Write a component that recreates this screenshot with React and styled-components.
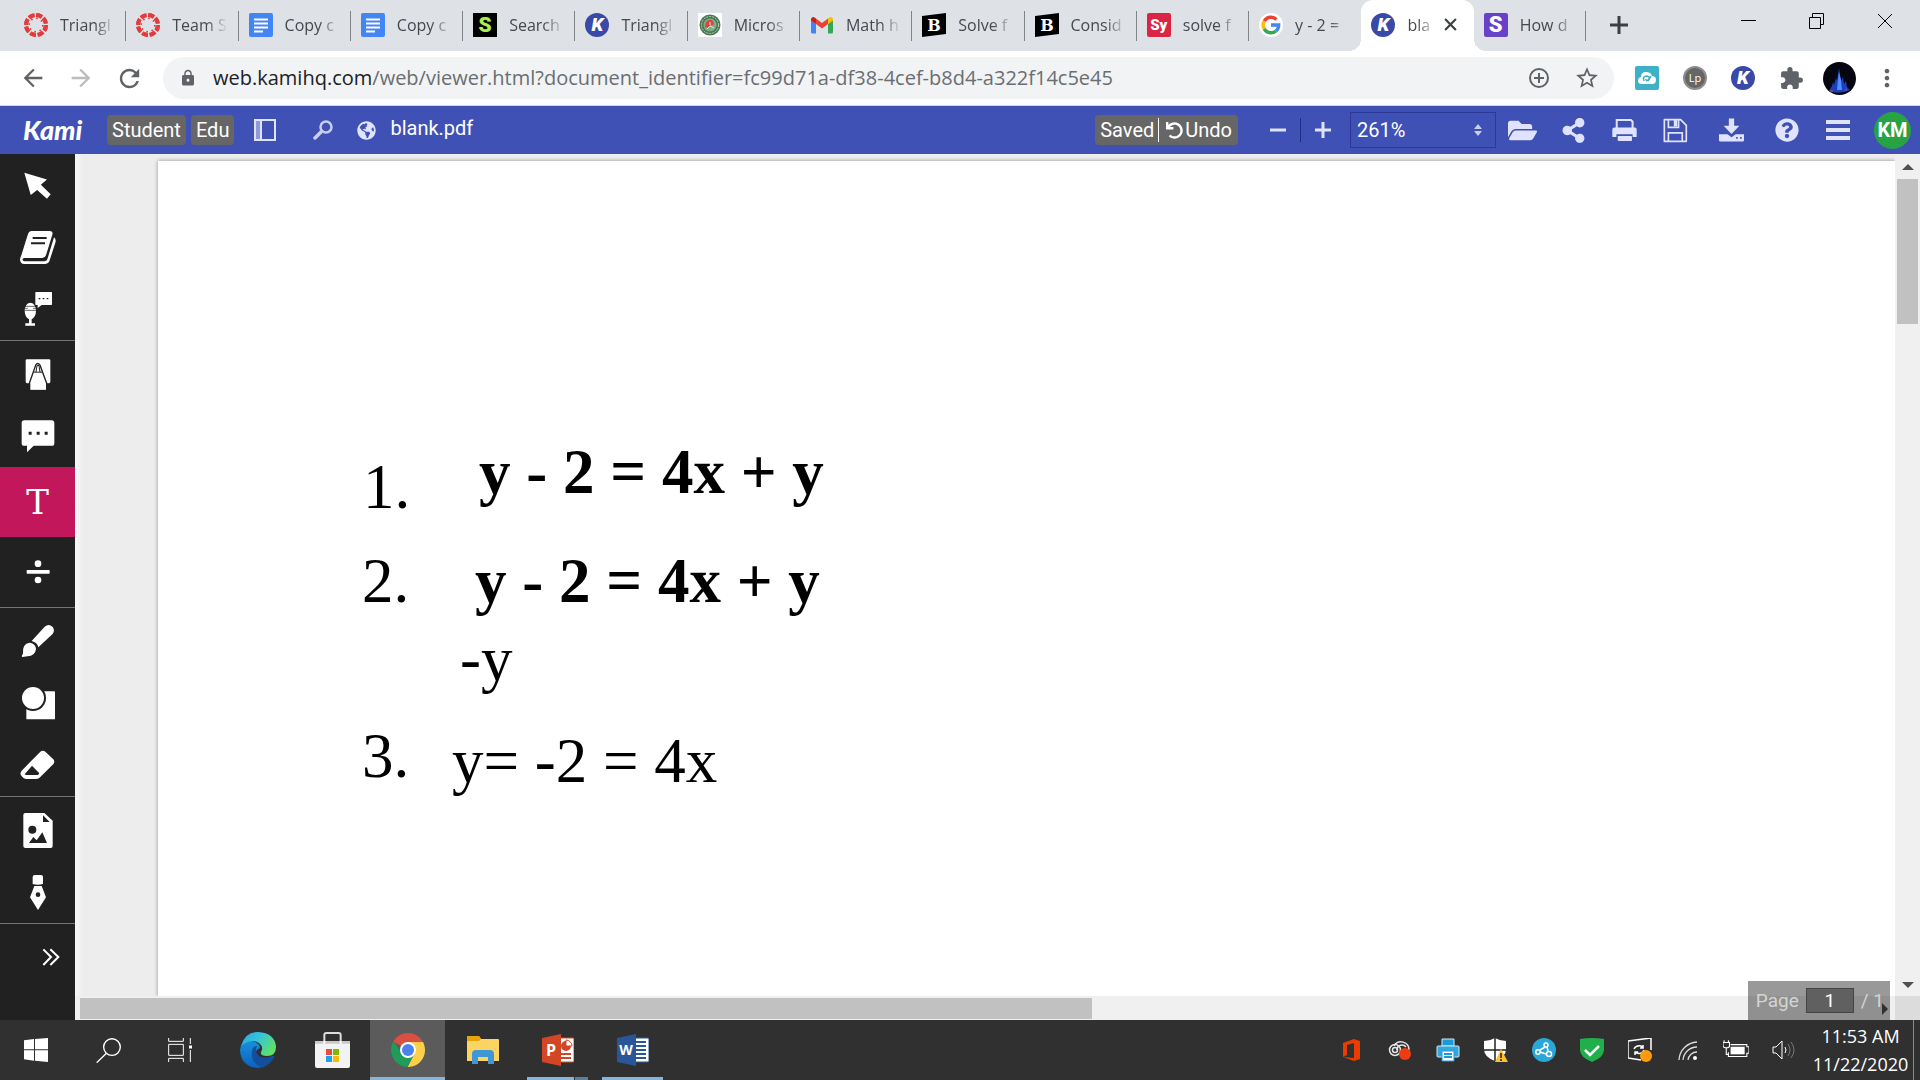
import React from 'react';
import styled, { createGlobalStyle, css } from 'styled-components';
import {
  FaFolderOpen,
  FaGlobeAmericas,
  FaQuestionCircle,
  FaShareAlt,
  FaUndo,
} from 'react-icons/fa';
import {
  MdArrowBack,
  MdArrowForward,
  MdExtension,
  MdLock,
  MdMoreVert,
  MdRefresh,
  MdStarBorder,
} from 'react-icons/md';

const GlobalStyle = createGlobalStyle`
  * {
    box-sizing: border-box;
  }
  body {
    margin: 0;
    font-family: 'Open Sans', 'Noto Sans', sans-serif;
    overflow: hidden;
  }
  button {
    border: 0;
    padding: 0;
    background: none;
    font: inherit;
    color: inherit;
    cursor: pointer;
  }
`;

const Svg = styled.svg`
  display: block;
  flex: none;
  width: ${(p) => p.$w}px;
  height: ${(p) => p.$h}px;
  fill: ${(p) => p.$fill || '#fff'};
`;

const Screen = styled.div`
  display: flex;
  flex-direction: column;
  height: 100vh;
`;

/* browser tabs */
const TabStrip = styled.header`
  display: flex;
  height: 51px;
  flex: none;
  background: #dee1e6;
`;
const TabList = styled.nav`
  display: flex;
  flex: 1;
  min-width: 0;
  padding-left: 14px;
`;
const Tab = styled.div`
  position: relative;
  display: flex;
  flex: 1 1 0;
  align-items: center;
  min-width: 0;
  padding: 0 8px 2px 10px;
  gap: 12px;
  ${(p) =>
    p.$active
      ? css`
          background: #fff;
          border-radius: 12px 12px 0 0;
          &::before,
          &::after {
            content: '';
            position: absolute;
            bottom: 0;
            width: 12px;
            height: 12px;
          }
          &::before {
            right: 100%;
            background: radial-gradient(circle at 0 0, transparent 12px, #fff 12px);
          }
          &::after {
            left: 100%;
            background: radial-gradient(circle at 100% 0, transparent 12px, #fff 12px);
          }
        `
      : !p.$noLine &&
        css`
          &::after {
            content: '';
            position: absolute;
            right: 0;
            top: 11px;
            width: 1px;
            height: 30px;
            background: #808387;
          }
        `}
`;
const TabTitle = styled.span`
  flex: 1;
  min-width: 0;
  white-space: nowrap;
  font-size: 16px;
  line-height: 24px;
  color: #45494d;
  mask-image: linear-gradient(to right, #000 ${(p) => (p.$active ? '10px, transparent 30px' : '34px, transparent 56px')});
`;
const CloseTab = styled.button`
  display: flex;
  margin-right: 9px;
`;
const WindowArea = styled.div`
  display: flex;
  flex: none;
  width: 334px;
  align-items: flex-start;
  padding-right: 1px;
`;
const NewTab = styled.button`
  display: grid;
  place-items: center;
  width: 66px;
  height: 50px;
`;
const WindowButtons = styled.div`
  display: flex;
  margin-left: auto;
`;
const WindowButton = styled.button`
  display: grid;
  place-items: center;
  width: 68px;
  height: 42px;
`;
const SquareMark = styled.span`
  display: grid;
  place-items: center;
  flex: none;
  width: 24px;
  height: 24px;
  border-radius: ${(p) => p.$radius || '0'};
  background: ${(p) => p.$bg};
  color: ${(p) => p.$color || '#fff'};
  font: 900 ${(p) => p.$size}/24px Roboto, sans-serif;
`;
const RoundMark = styled.span`
  display: grid;
  place-items: center;
  flex: none;
  width: 24px;
  height: 24px;
  border-radius: 50%;
  background: #3a49a8;
  color: #fff;
  font: italic 900 19px/24px Roboto, sans-serif;
`;
const LpMark = styled(RoundMark)`
  background: #666;
  border: 2px solid #8d8d8d;
  font: 400 11px/20px 'Open Sans', sans-serif;
`;

/* address bar */
const Address = styled.div`
  display: flex;
  align-items: center;
  flex: none;
  height: 55px;
  padding: 0 9px;
  background: #fff;
  border-bottom: 1px solid #d5d8dc;
`;
const NavButton = styled.button`
  display: grid;
  place-items: center;
  flex: none;
  width: 48px;
  height: 42px;
  color: ${(p) => (p.$muted ? '#babcbe' : '#5f6368')};
`;
const Omnibox = styled.div`
  display: flex;
  flex: 1;
  min-width: 0;
  align-items: center;
  height: 42px;
  margin-left: 10px;
  padding: 0 3px 0 16px;
  border-radius: 21px;
  background: #f1f3f4;
  color: #5f6368;
`;
const Url = styled.a`
  flex: 1;
  min-width: 0;
  overflow: hidden;
  margin-left: 16px;
  white-space: nowrap;
  font-size: 20px;
  line-height: 28px;
  color: #6a6e73;
  text-decoration: none;
  b {
    font-weight: 400;
    color: #202124;
  }
`;
const Extensions = styled.div`
  display: flex;
  flex: none;
  margin-left: 9px;
`;

/* app header */
const Header = styled.header`
  display: flex;
  align-items: center;
  flex: none;
  height: 48px;
  padding: 0 9px 0 23px;
  background: #3f51b5;
  color: #dfe3ff;
  font: 20px/30px Roboto, sans-serif;
`;
const Logo = styled.span`
  width: 84px;
  color: #fff;
  font: italic 900 27px/30px Lato, sans-serif;
`;
const Chip = styled.span`
  margin-right: 5px;
  padding: 0 5px;
  border-radius: 4px;
  background: #666;
  color: #fff;
`;
const HeaderTools = styled.div`
  display: flex;
  gap: 7px;
  width: 118px;
`;
const FileName = styled.span`
  flex: 1;
  margin-left: 14px;
  padding-bottom: 4px;
  color: #fff;
`;
const SaveState = styled.div`
  display: flex;
  margin-right: 21px;
  padding: 0 6px 0 5px;
  border-radius: 4px;
  background: #666;
  color: #fff;
`;
const UndoButton = styled.button`
  display: flex;
  align-items: center;
  gap: 2px;
  height: 24px;
  margin: 3px 0 3px 4px;
  padding-left: 7px;
  border-left: 1px solid #fff;
`;
const ZoomButton = styled.button`
  display: grid;
  place-items: center;
  width: 38px;
  height: 36px;
`;
const Divider = styled.span`
  width: 1px;
  height: 24px;
  margin: 0 3px;
  background: #1f2f86;
`;
const ZoomBox = styled.div`
  display: flex;
  align-items: center;
  width: 146px;
  height: 36px;
  margin: 0 1px 0 8px;
  padding-right: 13px;
  border: 1px solid #2a3a96;
`;
const ZoomSelect = styled.select`
  flex: 1;
  height: 34px;
  padding: 0 6px;
  border: 0;
  appearance: none;
  background: transparent;
  color: #fff;
  font: 20px/30px Roboto, sans-serif;
`;
const IconButton = styled.button`
  display: grid;
  place-items: center;
  flex: none;
  width: ${(p) => (p.$wide ? '60px' : '51px')};
  height: 40px;
`;
const Avatar = styled.button`
  width: 37px;
  height: 37px;
  margin-left: 11px;
  border-radius: 50%;
  background: #27a343;
  color: #fff;
  font: 700 20px/37px Roboto, sans-serif;
`;

/* workspace */
const Workspace = styled.div`
  display: flex;
  flex: 1;
  min-height: 0;
`;
const Sidebar = styled.aside`
  flex: none;
  width: 75px;
  background: #212121;
`;
const ToolGroup = styled.div`
  & + & {
    padding-top: 2px;
    border-top: 1px solid #757575;
  }
`;
const Tool = styled.button`
  display: flex;
  align-items: center;
  justify-content: ${(p) => (p.$end ? 'flex-end' : 'center')};
  width: 100%;
  height: ${(p) => (p.$tall ? '70px' : '62px')};
  padding-right: ${(p) => (p.$end ? '15px' : '0')};
  background: ${(p) => (p.$active ? '#c2185b' : 'none')};
  color: #fff;
  font: 34px/40px 'DejaVu Serif', serif;
`;
const ViewerArea = styled.main`
  position: relative;
  display: grid;
  flex: 1;
  min-width: 0;
  grid-template: minmax(0, 1fr) 24px / minmax(0, 1fr) 25px;
`;
const Canvas = styled.div`
  padding: 7px 0 0 83px;
  background: linear-gradient(to right, #f8f8f8, #ededed 8px);
`;
const Page = styled.article`
  position: relative;
  height: 100%;
  background: #fff;
  box-shadow: 0 0 4px rgba(0, 0, 0, 0.4);
  clip-path: inset(-6px 0 0 -6px);
`;
const Note = styled.div`
  position: absolute;
  left: ${(p) => p.$left}px;
  top: ${(p) => p.$top}px;
  white-space: nowrap;
  color: #000;
  font: ${(p) => (p.$bold ? 700 : 400)} 63px/70px 'Liberation Serif', serif;
`;
const VerticalBar = styled.div`
  display: flex;
  flex-direction: column;
  align-items: center;
  padding: 10px 0 8px;
  background: #f0f0f0;
`;
const VerticalTrack = styled.div`
  flex: 1;
  align-self: stretch;
  padding: 9px 2px 0;
`;
const VerticalThumb = styled.div`
  height: 18%;
  background: #c1c1c1;
`;
const HorizontalBar = styled.div`
  display: flex;
  align-items: center;
  justify-content: space-between;
  padding: 2px 7px 1px 5px;
  background: #f0f0f0;
`;
const HorizontalThumb = styled.div`
  width: 56%;
  height: 21px;
  background: #c1c1c1;
`;
const Corner = styled.div`
  background: #dcdcdc;
`;
const PageBox = styled.div`
  position: absolute;
  right: 30px;
  bottom: 0;
  display: flex;
  align-items: center;
  height: 39px;
  padding: 0 6px 0 8px;
  background: rgba(0, 0, 0, 0.4);
  color: #d4d4d4;
  font: 19px/24px Roboto, sans-serif;
`;
const PageInput = styled.input`
  width: 48px;
  height: 25px;
  margin: 0 7px;
  border: 1px solid #444;
  background: #606060;
  color: #fff;
  text-align: center;
  font: 19px/24px Roboto, sans-serif;
`;

/* taskbar */
const Tasks = styled.footer`
  display: flex;
  flex: none;
  height: 60px;
  background: #303030;
  color: #fff;
`;
const taskLines = {
  active: css`
    left: 0;
    right: 0;
    background: #82b6de;
  `,
  open: css`
    left: 7px;
    right: 7px;
    background: #82b6de;
  `,
  stacked: css`
    left: 7px;
    right: 7px;
    background: linear-gradient(to right, #82b6de 47px, #303030 47px, #303030 48px, #5d7f99 48px);
  `,
};
const TaskButton = styled.button`
  position: relative;
  display: grid;
  place-items: center;
  width: ${(p) => (p.$wide ? '75px' : '72px')};
  height: 60px;
  background: ${(p) => (p.$state === 'active' ? '#5b5b5b' : 'none')};
  ${(p) =>
    p.$state &&
    css`
      &::after {
        content: '';
        position: absolute;
        bottom: 0;
        height: 3px;
        ${taskLines[p.$state]}
      }
    `}
`;
const TaskGroup = styled.div`
  display: flex;
  margin-right: 4px;
`;
const Tray = styled.div`
  display: flex;
  align-items: center;
  margin-left: auto;
  padding-right: 6px;
`;
const TrayButton = styled.button`
  display: grid;
  place-items: center;
  width: 48px;
  height: 60px;
`;
const Clock = styled.div`
  display: flex;
  flex-direction: column;
  justify-content: center;
  align-items: center;
  width: 106px;
  height: 60px;
  border-right: 1px solid #8a8a8a;
  font-size: 18px;
  line-height: 28px;
`;

const CanvasIcon = () => (
  <Svg viewBox="0 0 24 24" $w={24} $h={24}>
    <circle cx="12" cy="12" r="9" fill="none" stroke="#e23c3c" strokeWidth="6" strokeDasharray="5.4 1.67" />
    <circle cx="12" cy="12" r="8" fill="#dee1e6" />
    <circle cx="12" cy="12" r="10" fill="none" stroke="#e23c3c" strokeWidth="4" strokeDasharray="6 1.85" />
    <circle cx="12" cy="12" r="6.800" fill="none" stroke="#e23c3c" strokeWidth="1.600" strokeDasharray="1.6 3.74" />
  </Svg>
);

const DocsIcon = () => (
  <Svg viewBox="0 0 24 24" $w={24} $h={24}>
    <rect width="24" height="24" rx="2" fill="#4285f4" />
    <path d="M5 6.5h14M5 10.5h14M5 14.5h14M5 18.5h9" stroke="#fff" strokeWidth="2" />
  </Svg>
);

const SealIcon = () => (
  <Svg viewBox="0 0 24 24" $w={24} $h={24}>
    <rect width="24" height="24" fill="#fff" />
    <circle cx="12" cy="12" r="10.5" fill="#4b7a55" />
    <circle cx="12" cy="12" r="8.5" fill="none" stroke="#b9cdb4" strokeDasharray="2 1" />
    <circle cx="12" cy="12" r="6.5" fill="#7fae8b" />
    <path d="M7 14q0-6 4-7t5 4q-1 2-4 1-1 4-5 2z" fill="#d8473f" />
    <path d="M9 16l3-3 4 2M12 9v3" stroke="#dfe9dd" fill="none" />
  </Svg>
);

const GmailIcon = () => (
  <Svg viewBox="0 0 24 24" $w={24} $h={24}>
    <path d="M1 6v13q0 1.500 1.500 1.500H6V11z" fill="#4285f4" />
    <path d="M23 6v13q0 1.500-1.500 1.500H18V11z" fill="#34a853" />
    <path d="M18 5.500V11l5-3.500V6q-1-3-4-1.300z" fill="#fbbc04" />
    <path d="M6 5.500V11L1 7.500V6q1-3 4-1.300z" fill="#c5221f" />
    <path d="M6 5.500l6 4.500 6-4.500V11l-6 4.500L6 11z" fill="#ea4335" />
  </Svg>
);

const BarkIcon = () => (
  <Svg viewBox="0 0 24 24" $w={24} $h={24}>
    <path d="M0 3L24 0v21L0 24z" fill="#000" />
    <text x="12" y="18" textAnchor="middle" fill="#fff" fontFamily="DejaVu Serif" fontWeight="700" fontSize="16">B</text>
  </Svg>
);

const GoogleIcon = () => (
  <Svg viewBox="0 0 24 24" $w={24} $h={24}>
    <circle cx="12" cy="12" r="12" fill="#fff" />
    <g fill="none" strokeWidth="3.400">
      <path d="M17.500 6.500A7.800 7.800 0 0 0 5.200 8.200" stroke="#ea4335" />
      <path d="M5.200 8.200a7.800 7.800 0 0 0 0 7.600" stroke="#fbbc05" />
      <path d="M5.200 15.800a7.800 7.800 0 0 0 11.800 2.200" stroke="#34a853" />
      <path d="M17 18a7.800 7.800 0 0 0 2.700-6H12" stroke="#4285f4" />
    </g>
  </Svg>
);

const KamiMark = () => <RoundMark>K</RoundMark>;

const TABS = [
  { title: 'Triangl', icon: <CanvasIcon /> },
  { title: 'Team S', icon: <CanvasIcon /> },
  { title: 'Copy c', icon: <DocsIcon /> },
  { title: 'Copy c', icon: <DocsIcon /> },
  { title: 'Search', icon: <SquareMark $bg="#000" $color="#a9f04d" $size="21px">S</SquareMark> },
  { title: 'Triangl', icon: <KamiMark /> },
  { title: 'Micros', icon: <SealIcon /> },
  { title: 'Math h', icon: <GmailIcon /> },
  { title: 'Solve f', icon: <BarkIcon /> },
  { title: 'Consid', icon: <BarkIcon /> },
  { title: 'solve f', icon: <SquareMark $bg="#db2544" $size="15px" $radius="2px">Sy</SquareMark> },
  { title: 'y - 2 =', icon: <GoogleIcon />, noLine: true },
  { title: 'bla', icon: <KamiMark />, active: true },
  { title: 'How d', icon: <SquareMark $bg="#6941c8" $size="22px" $radius="2px">S</SquareMark> },
];

const NOTES = [
  { text: '1.', left: 205, top: 291 },
  { text: 'y - 2 = 4x + y', left: 321, top: 276, bold: true },
  { text: '2.', left: 204, top: 385 },
  { text: 'y - 2 = 4x + y', left: 317, top: 385, bold: true },
  { text: '-y', left: 302, top: 463 },
  { text: '3.', left: 204, top: 560 },
  { text: 'y= -2 = 4x', left: 294, top: 565 },
];

const DARK = '#212121';

const TOOL_GROUPS = [
  [
    {
      label: 'Select',
      icon: (
        <Svg viewBox="74 66 80 80" $w={27} $h={27}>
          <path d="M75 68L142 88L124 104L153 132L142 145L113 119L94 134Z" />
        </Svg>
      ),
    },
    {
      label: 'Dictionary',
      icon: (
        <Svg viewBox="57 240 114 105" $w={38} $h={35}>
          <path d="M95 243H148Q160 243 157 254L138 316Q135 324 127 324H72Q66 326 68 331Q70 334 75 334H133Q140 334 142 328L162 262Q168 266 167 275L148 334Q145 342 136 342H73Q60 342 60 328Q61 322 64 316L84 252Q87 243 95 243Z" />
          <path d="M98 264H140M93 280H135" stroke={DARK} strokeWidth="6" />
        </Svg>
      ),
    },
    {
      label: 'Comment by voice',
      icon: (
        <Svg viewBox="69 424 96 108" $w={32} $h={36}>
          <ellipse cx="94" cy="484" rx="17" ry="25" />
          <path d="M77 470H111M77 482H111M77 476H86M102 476H111" stroke={DARK} strokeWidth="2" />
          <path d="M90 508H98V521H108V528H79V521H90Z" />
          <path d="M111 427H157Q159 427 159 429V464Q159 466 157 466H128L116 475V466H111Q109 466 109 464V429Q109 427 111 427Z" />
          <path d="M119 447h5M131 447h5M143 447h5" stroke={DARK} strokeWidth="4" />
        </Svg>
      ),
    },
  ],
  [
    {
      label: 'Markup',
      icon: (
        <Svg viewBox="75 622 78 98" $w={26} $h={33}>
          <rect x="77" y="625" width="74" height="72" rx="4" />
          <rect x="91" y="690" width="47" height="27" />
          <path d="M87 700L107 643Q113 633 120 643L141 700" fill="none" stroke={DARK} strokeWidth="4" />
          <path d="M102 664H126M108 664L111 644H117L120 664" fill="none" stroke={DARK} strokeWidth="3" />
        </Svg>
      ),
    },
    {
      label: 'Comment',
      icon: (
        <Svg viewBox="62 805 102 101" $w={34} $h={34}>
          <path d="M72 808H154Q162 808 162 816V877Q162 885 154 885H100L80 904V885H72Q64 885 64 877V816Q64 808 72 808Z" />
          <path d="M85 847h9M109 847h9M133 847h9" stroke={DARK} strokeWidth="9" />
        </Svg>
      ),
    },
    { label: 'Text box', glyph: 'T', active: true, tall: true },
    {
      label: 'Equation',
      tall: true,
      icon: (
        <Svg viewBox="77 0 72 72" $w={24} $h={24}>
          <circle cx="113" cy="11" r="10" />
          <circle cx="113" cy="60" r="10" />
          <rect x="79" y="30" width="69" height="11" rx="2" />
        </Svg>
      ),
    },
  ],
  [
    {
      label: 'Drawing',
      icon: (
        <Svg viewBox="60 194 102 102" $w={34} $h={34}>
          <path d="M131 202Q143 192 155 203Q163 215 154 225L112 264Q109 249 92 245Z" />
          <path d="M86 250Q105 253 105 270Q102 290 80 291L64 293Q60 291 66 283Q63 253 86 250Z" />
        </Svg>
      ),
    },
    {
      label: 'Shapes',
      icon: (
        <Svg viewBox="63 380 108 102" $w={36} $h={34}>
          <rect x="82" y="396" width="86" height="84" rx="2" />
          <circle cx="102" cy="416" r="39" fill={DARK} />
          <circle cx="102" cy="416" r="33" />
        </Svg>
      ),
    },
    {
      label: 'Eraser',
      icon: (
        <Svg viewBox="59 564 105 102" $w={35} $h={34}>
          <path d="M120 575Q128 569 135 575L159 598Q164 604 160 611L120 651Q115 657 108 657H78Q71 657 67 652L62 646Q58 639 64 632Z" />
          <path d="M73 643L95 617L117 640L113 645H77Z" fill={DARK} />
        </Svg>
      ),
    },
  ],
  [
    {
      label: 'Image',
      icon: (
        <Svg viewBox="66 750 96 111" $w={32} $h={37}>
          <path d="M76 753H133L158 776V852Q158 858 152 858H76Q70 858 70 852V759Q70 753 76 753Z" />
          <path d="M129 760L149 780H129ZM87 843L100 825L110 835L127 811L141 843Z" fill={DARK} />
          <circle cx="97" cy="803" r="12" fill={DARK} />
        </Svg>
      ),
    },
    {
      label: 'Signature',
      icon: (
        <Svg viewBox="87 936 54 111" $w={18} $h={37}>
          <path d="M104 939H123Q129 939 129 945V966Q114 970 98 966V945Q98 939 104 939ZM103 972H125L138 1006L114 1044L90 1006Z" />
          <circle cx="114" cy="998" r="7" fill={DARK} />
        </Svg>
      ),
    },
  ],
  [
    {
      label: 'Expand',
      end: true,
      icon: (
        <Svg viewBox="126 1156 54 60" $w={18} $h={20}>
          <path d="M130 1163L153 1186L130 1210M151 1163L175 1186L151 1210" fill="none" stroke="#fff" strokeWidth="6" />
        </Svg>
      ),
    },
  ],
];

const HEADER_ICONS = [
  { label: 'Open', icon: <FaFolderOpen size={29} /> },
  { label: 'Share', icon: <FaShareAlt size={25} /> },
  {
    label: 'Print',
    icon: (
      <Svg viewBox="638 355 74 74" $w={25} $h={25} $fill="#dfe3ff">
        <path d="M652 386V361H694L699 366V386" fill="none" stroke="#dfe3ff" strokeWidth="6" />
        <path d="M645 383H706Q711 383 711 389V411H699V403H651V411H639V389Q639 383 645 383Z" />
        <rect x="655" y="408" width="42" height="15" rx="2" />
      </Svg>
    ),
  },
  {
    label: 'Save',
    icon: (
      <Svg viewBox="790 358 74 74" $w={25} $h={25}>
        <path d="M794 363H842L859 380V427H794Z" fill="none" stroke="#dfe3ff" strokeWidth="5" strokeLinejoin="round" />
        <path d="M806 363V386H836V363M806 427V402H847V427" fill="none" stroke="#dfe3ff" strokeWidth="5" />
        <rect x="822" y="363" width="10" height="20" fill="#dfe3ff" />
      </Svg>
    ),
  },
  {
    label: 'Download',
    wide: true,
    icon: (
      <Svg viewBox="957 350 82 78" $w={27} $h={26} $fill="#dfe3ff">
        <path d="M990 354H1006V376H1022L998 401L974 376H990Z" />
        <path d="M960 402H986L998 411L1011 402H1036V420Q1036 424 1032 424H964Q960 424 960 420Z" />
        <path d="M1012 413h5M1024 413h5" stroke="#3f51b5" strokeWidth="5" />
      </Svg>
    ),
  },
  { label: 'Help', icon: <FaQuestionCircle size={24} /> },
  {
    label: 'Menu',
    icon: (
      <Svg viewBox="0 0 24 20" $w={24} $h={20}>
        <path d="M0 2h24M0 10h24M0 18h24" stroke="#dfe3ff" strokeWidth="4" />
      </Svg>
    ),
  },
];

const SYSTEM_TASKS = [
  {
    label: 'Start',
    icon: (
      <Svg viewBox="0 0 72 72" $w={24} $h={24}>
        <path d="M0 7L30 3V34H0ZM33 3L72 0V34H33ZM0 37H30V68L0 64ZM33 37H72V72L33 68Z" />
      </Svg>
    ),
  },
  {
    label: 'Search',
    icon: (
      <Svg viewBox="0 0 72 72" $w={25} $h={25}>
        <g fill="none" stroke="#fff" strokeWidth="4">
          <circle cx="46" cy="26" r="24" />
          <path d="M30 44L2 71" />
        </g>
      </Svg>
    ),
  },
  {
    label: 'Task View',
    icon: (
      <Svg viewBox="0 0 72 72" $w={24} $h={24}>
        <g fill="none" stroke="#fff" strokeWidth="3">
          <path d="M2 0V10H46V0M2 72V61H46V72M2 19H46V52H2ZM67 0V18M67 36V72" />
          <path d="M63 27H72" strokeWidth="9" />
        </g>
      </Svg>
    ),
  },
];

const APP_TASKS = [
  {
    label: 'Edge',
    icon: (
      <Svg viewBox="0 0 36 36" $w={36} $h={36}>
        <defs>
          <linearGradient id="edgeTop" x1="0" x2="1" y1="0" y2="0.500">
            <stop offset="0" stopColor="#2aa6e0" />
            <stop offset="0.500" stopColor="#35c3dc" />
            <stop offset="1" stopColor="#5ee06a" />
          </linearGradient>
          <linearGradient id="edgeLow" x1="0" x2="0" y1="0" y2="1">
            <stop offset="0" stopColor="#1b8fd8" />
            <stop offset="1" stopColor="#0a62c0" />
          </linearGradient>
        </defs>
        <path d="M0 18Q1 7 12 9Q20 11 20 16Q13 19 18 25Q24 30 34 24Q28 36 18 36Q1 35 0 18Z" fill="url(#edgeLow)" />
        <path d="M12 19Q10 30 21 35Q29 34 34 26Q35 23 32 24Q25 27 19 24Q14 20 17 14Q13 14 12 19Z" fill="#124f9c" />
        <path d="M1 14Q5 0 18 0Q35 1 36 15Q36 24 27 24Q20 24 21 20Q24 15 19 11Q11 6 1 14Z" fill="url(#edgeTop)" />
      </Svg>
    ),
  },
  {
    label: 'Microsoft Store',
    icon: (
      <Svg viewBox="0 0 105 108" $w={35} $h={36}>
        <path d="M28 30V9Q28 3 34 3H71Q77 3 77 9V30" fill="none" stroke="#ddd" strokeWidth="6" />
        <path d="M0 27H105V102Q105 108 99 108H6Q0 108 0 102Z" fill="#f3f3f3" />
        <path d="M0 27H105V35H0Z" fill="#c9c9c9" />
        <path d="M28 27v8M77 27v8" stroke="#fff" strokeWidth="6" />
        <path d="M33 51H51V69H33Z" fill="#e74c3c" />
        <path d="M54 51H72V69H54Z" fill="#7fb900" />
        <path d="M33 72H51V90H33Z" fill="#1aa3e8" />
        <path d="M54 72H72V90H54Z" fill="#fbb80b" />
      </Svg>
    ),
  },
  {
    label: 'Chrome',
    state: 'active',
    icon: (
      <Svg viewBox="0 0 34 34" $w={34} $h={34}>
        <path d="M17 17L2.300 8.500A17 17 0 0 1 31.700 8.500L32 10H17z" fill="#d94f41" />
        <path d="M32 9A17 17 0 0 1 16.500 34L24 20 17 9z" fill="#fcd049" />
        <path d="M2.300 8.500A17 17 0 0 0 16.500 34L23 21 11 20z" fill="#1f9d58" />
        <circle cx="17" cy="17" r="8" fill="#fff" />
        <circle cx="17" cy="17" r="6" fill="#4a83f0" />
      </Svg>
    ),
  },
  {
    label: 'File Explorer',
    icon: (
      <Svg viewBox="0 0 32 28" $w={32} $h={28}>
        <path d="M0 1Q0 0 1 0H12L14 3H31Q32 3 32 4V25H0Z" fill="#fcd462" />
        <path d="M0 1Q0 0 1 0H12L14 3L12 5H0Z" fill="#e5a50f" />
        <path d="M5 28V18Q5 14 9 14H23Q27 14 27 18V28H21V21H11V28Z" fill="#3f97d8" />
      </Svg>
    ),
  },
  {
    label: 'PowerPoint',
    state: 'stacked',
    icon: (
      <Svg viewBox="0 0 32 32" $w={32} $h={32}>
        <path d="M17 4H31Q32 4 32 5V27Q32 28 31 28H17Z" fill="#fff" stroke="#d24625" />
        <circle cx="24" cy="12" r="5" fill="#d24625" />
        <path d="M24 12V6A6 6 0 0 1 30 12Z" fill="#fff" stroke="#d24625" />
        <path d="M19 20H29M19 24H29" stroke="#d24625" strokeWidth="2" />
        <path d="M0 4L19 0V32L0 28Z" fill="#d24625" />
        <text x="9" y="22" textAnchor="middle" fill="#fff" fontFamily="Open Sans" fontWeight="700" fontSize="16">P</text>
      </Svg>
    ),
  },
  {
    label: 'Word',
    state: 'open',
    icon: (
      <Svg viewBox="0 0 32 32" $w={32} $h={32}>
        <path d="M17 4H31Q32 4 32 5V27Q32 28 31 28H17Z" fill="#fff" stroke="#2a5699" />
        <path d="M19 8H29M19 12H29M19 16H29M19 20H29M19 24H29" stroke="#2a5699" strokeWidth="2" />
        <path d="M0 4L19 0V32L0 28Z" fill="#2a5699" />
        <text x="9" y="21" textAnchor="middle" fill="#fff" fontFamily="Open Sans" fontWeight="700" fontSize="14">W</text>
      </Svg>
    ),
  },
];

const TRAY = [
  {
    label: 'Office',
    icon: (
      <Svg viewBox="0 0 24 24" $w={24} $h={24}>
        <path d="M3 5L14 1L20 3V21L14 23L3 19L14 20V5L7 7V17L3 19Z" fill="#eb3c00" />
      </Svg>
    ),
  },
  {
    label: 'Creative Cloud',
    icon: (
      <Svg viewBox="0 0 24 24" $w={24} $h={24}>
        <g fill="none" stroke="#e5e5e5" strokeWidth="1.500">
          <circle cx="7" cy="12" r="5.500" />
          <circle cx="7" cy="12" r="2.500" />
          <path d="M6 8A8 8 0 0 1 21 12M9 12A5 5 0 0 1 18 9" />
        </g>
        <circle cx="17" cy="16" r="6" fill="#f03c12" />
      </Svg>
    ),
  },
  {
    label: 'Printer',
    icon: (
      <Svg viewBox="0 0 24 24" $w={24} $h={24}>
        <path d="M6 1H18V8H6Z" fill="#1b9bdc" stroke="#cfe9f7" />
        <rect x="1" y="8" width="22" height="11" rx="1" fill="#35a7e0" stroke="#cfe9f7" />
        <path d="M6 13H18V23H6Z" fill="#fff" stroke="#1b9bdc" />
        <path d="M8 16H16M8 19H16" stroke="#1b9bdc" strokeWidth="2" />
      </Svg>
    ),
  },
  {
    label: 'Windows Security',
    icon: (
      <Svg viewBox="0 0 24 24" $w={24} $h={24}>
        <path d="M11 0Q16 3 22 3V11Q22 19 11 23Q0 19 0 11V3Q6 3 11 0Z" />
        <path d="M11 0V23M0 12H22" stroke="#222" strokeWidth="1.500" />
        <path d="M17 11L24 24H11Z" fill="#fbc02d" />
        <path d="M17 15V20M17 21V23" stroke="#222" strokeWidth="1.500" />
      </Svg>
    ),
  },
  {
    label: 'Share',
    icon: (
      <Svg viewBox="0 0 24 24" $w={24} $h={24}>
        <circle cx="12" cy="12" r="12" fill="#2aa7d9" />
        <g fill="none" stroke="#fff" strokeWidth="1.500">
          <circle cx="6" cy="14" r="2.200" />
          <circle cx="14" cy="7" r="2" />
          <circle cx="17" cy="16" r="2.500" />
          <path d="M8 12L13 9M8 14L14 16M15 9L16 13" />
        </g>
      </Svg>
    ),
  },
  {
    label: 'Protection',
    icon: (
      <Svg viewBox="0 0 24 24" $w={24} $h={24}>
        <path d="M0 1Q12 -1 24 1V12Q24 19 12 24Q0 19 0 12Z" fill="#20b04b" />
        <path d="M5 12L10 17L19 8" fill="none" stroke="#fff" strokeWidth="2.500" />
      </Svg>
    ),
  },
  {
    label: 'Update',
    icon: (
      <Svg viewBox="0 0 24 24" $w={24} $h={24}>
        <g fill="none" stroke="#fff" strokeWidth="1.500">
          <path d="M0 3L23 0V12M0 3V20L13 22" />
          <path d="M6 11Q8 7 13 8L15 10M15 7V10H12M16 12Q14 17 9 15L7 14M7 17V14H10" />
        </g>
        <circle cx="18" cy="18" r="6" fill="#ff9b0c" />
      </Svg>
    ),
  },
  {
    label: 'Wi-Fi',
    icon: (
      <Svg viewBox="0 0 24 24" $w={24} $h={24}>
        <g fill="none" stroke="#ddd" strokeWidth="1.300">
          <path d="M3 22A19 19 0 0 1 21 4M7 22A14 14 0 0 1 21 9M12 22A9 9 0 0 1 21 14" />
        </g>
        <circle cx="19" cy="20" r="2" />
      </Svg>
    ),
  },
  {
    label: 'Battery',
    icon: (
      <Svg viewBox="0 0 24 24" $w={26} $h={26}>
        <path d="M7 7H22V9H24V15H22V18H5V14" fill="none" stroke="#fff" />
        <path d="M7 9H20V16H7Z" />
        <path d="M1 3V5M5 3V5M0 5H6V8Q6 10 3 10Q0 10 0 8ZM3 10V16H5" fill="none" stroke="#fff" />
      </Svg>
    ),
  },
  {
    label: 'Volume',
    icon: (
      <Svg viewBox="0 0 24 24" $w={24} $h={24}>
        <path d="M1 9H4L10 3V21L4 15H1Z" fill="none" stroke="#fff" />
        <path d="M13 9Q15 12 13 15" fill="none" stroke="#fff" />
        <path d="M16 6Q20 12 16 18M19 4Q25 12 19 20" fill="none" stroke="#777" />
      </Svg>
    ),
  },
];

function BrowserTabs() {
  return (
    <TabStrip>
      <TabList>
        {TABS.map((tab, i) => (
          <Tab key={i} $active={tab.active} $noLine={tab.noLine}>
            {tab.icon}
            <TabTitle $active={tab.active}>{tab.title}</TabTitle>
            {tab.active && (
              <CloseTab aria-label="Close tab">
                <Svg viewBox="0 0 12 12" $w={13} $h={13}>
                  <path d="M1 1l10 10M11 1L1 11" stroke="#3c4043" strokeWidth="2" />
                </Svg>
              </CloseTab>
            )}
          </Tab>
        ))}
      </TabList>
      <WindowArea>
        <NewTab aria-label="New tab">
          <Svg viewBox="0 0 18 18" $w={18} $h={18}>
            <path d="M9 0v18M0 9h18" stroke="#3c4043" strokeWidth="3" />
          </Svg>
        </NewTab>
        <WindowButtons>
          <WindowButton aria-label="Minimize">
            <Svg viewBox="0 0 16 16" $w={16} $h={16}>
              <path d="M0 7.500h15" stroke="#000" />
            </Svg>
          </WindowButton>
          <WindowButton aria-label="Restore">
            <Svg viewBox="0 0 16 16" $w={16} $h={16}>
              <path d="M.5 4.500h11v11H.5zM3.500 4V.5h11v11H12" fill="none" stroke="#000" />
            </Svg>
          </WindowButton>
          <WindowButton aria-label="Close">
            <Svg viewBox="0 0 16 16" $w={16} $h={16}>
              <path d="M1 1l14 14M15 1L1 15" stroke="#000" />
            </Svg>
          </WindowButton>
        </WindowButtons>
      </WindowArea>
    </TabStrip>
  );
}

function AddressBar() {
  return (
    <Address>
      <NavButton aria-label="Back"><MdArrowBack size={28} /></NavButton>
      <NavButton aria-label="Forward" $muted><MdArrowForward size={28} /></NavButton>
      <NavButton aria-label="Reload"><MdRefresh size={29} /></NavButton>
      <Omnibox>
        <MdLock size={18} />
        <Url href="#document">
          <b>web.kamihq.com</b>/web/viewer.html?document_identifier=fc99d71a-df38-4cef-b8d4-a322f14c5e45
        </Url>
        <NavButton aria-label="Zoom">
          <Svg viewBox="0 0 20 20" $w={20} $h={20}>
            <circle cx="10" cy="10" r="9" fill="none" stroke="#5f6368" strokeWidth="2" />
            <path d="M10 5v10M5 10h10" stroke="#5f6368" strokeWidth="2" />
          </Svg>
        </NavButton>
        <NavButton aria-label="Bookmark"><MdStarBorder size={26} /></NavButton>
      </Omnibox>
      <Extensions>
        <NavButton aria-label="Cloud extension">
          <Svg viewBox="0 0 24 24" $w={24} $h={24}>
            <rect width="24" height="24" rx="2" fill="#3eb1c8" />
            <path d="M7 18Q3 18 3 14.500Q3 12 6 11Q6 6 11 6Q16 6 17 10Q21 10 21 14Q21 18 17 18Z" fill="#fff" />
            <path d="M9 15Q7 10 12 10Q16 11 13 14Q11 16 11 13M16 10L13 15" fill="none" stroke="#3eb1c8" strokeWidth="1.500" />
          </Svg>
        </NavButton>
        <NavButton aria-label="Lp extension"><LpMark>Lp</LpMark></NavButton>
        <NavButton aria-label="Kami extension"><KamiMark /></NavButton>
        <NavButton aria-label="Extensions"><MdExtension size={25} /></NavButton>
        <NavButton aria-label="Profile">
          <Svg viewBox="0 0 33 33" $w={33} $h={33}>
            <circle cx="16.500" cy="16.500" r="16.500" fill="#05060f" />
            <path d="M6 29L9 24L10 20L11 23L13 16L14 19L16 6L18 19L20 15L21 22L23 19L24 25L27 28Q16 33 6 29Z" fill="#1c3fc0" />
            <path d="M14 28L15 17L16 10L18 18L19 28Z" fill="#4f8cff" />
            <path d="M7 29h3M22 28h2" stroke="#c4505a" />
          </Svg>
        </NavButton>
        <NavButton aria-label="Menu"><MdMoreVert size={28} /></NavButton>
      </Extensions>
    </Address>
  );
}

function KamiHeader() {
  return (
    <Header>
      <Logo>Kami</Logo>
      <Chip>Student</Chip>
      <Chip>Edu</Chip>
      <HeaderTools>
        <IconButton aria-label="Toggle thumbnails">
          <Svg viewBox="0 0 22 22" $w={22} $h={22}>
            <rect x="1" y="1" width="20" height="20" fill="none" stroke="#dfe3ff" strokeWidth="2" />
            <path d="M4 2v18" stroke="#8f9ad6" strokeWidth="4" />
            <path d="M7 2v18" stroke="#dfe3ff" strokeWidth="2" />
          </Svg>
        </IconButton>
        <IconButton aria-label="Find">
          <Svg viewBox="0 0 20 20" $w={20} $h={20}>
            <circle cx="13" cy="7" r="5.500" fill="none" stroke="#c9cef0" strokeWidth="2.500" />
            <path d="M8 12L2 18" stroke="#c9cef0" strokeWidth="3.500" strokeLinecap="round" />
          </Svg>
        </IconButton>
      </HeaderTools>
      <FaGlobeAmericas size={19} />
      <FileName>blank.pdf</FileName>
      <SaveState>
        <span>Saved</span>
        <UndoButton><FaUndo size={17} />Undo</UndoButton>
      </SaveState>
      <ZoomButton aria-label="Zoom out">
        <Svg viewBox="0 0 16 16" $w={16} $h={16}>
          <path d="M0 8h16" stroke="#dfe3ff" strokeWidth="3" />
        </Svg>
      </ZoomButton>
      <Divider />
      <ZoomButton aria-label="Zoom in">
        <Svg viewBox="0 0 16 16" $w={16} $h={16}>
          <path d="M0 8h16M8 0v16" stroke="#dfe3ff" strokeWidth="3" />
        </Svg>
      </ZoomButton>
      <ZoomBox>
        <ZoomSelect aria-label="Zoom level" defaultValue="261%">
          <option>261%</option>
          <option>100%</option>
        </ZoomSelect>
        <Svg viewBox="0 0 8 12" $w={8} $h={12} $fill="#c9cef0">
          <path d="M4 0l4 5H0zM4 12l4-5H0z" />
        </Svg>
      </ZoomBox>
      {HEADER_ICONS.map((item) => (
        <IconButton key={item.label} aria-label={item.label} $wide={item.wide}>
          {item.icon}
        </IconButton>
      ))}
      <Avatar aria-label="Account">KM</Avatar>
    </Header>
  );
}

function Toolbar() {
  return (
    <Sidebar>
      {TOOL_GROUPS.map((group, i) => (
        <ToolGroup key={i}>
          {group.map((tool) => (
            <Tool key={tool.label} aria-label={tool.label} $active={tool.active} $tall={tool.tall} $end={tool.end}>
              {tool.icon || tool.glyph}
            </Tool>
          ))}
        </ToolGroup>
      ))}
    </Sidebar>
  );
}

function Viewer() {
  return (
    <ViewerArea>
      <Canvas>
        <Page>
          {NOTES.map((note, i) => (
            <Note key={i} $left={note.left} $top={note.top} $bold={note.bold}>
              {note.text}
            </Note>
          ))}
        </Page>
      </Canvas>
      <VerticalBar>
        <Svg viewBox="0 0 12 6" $w={12} $h={6} $fill="#505050"><path d="M6 0l6 6H0z" /></Svg>
        <VerticalTrack><VerticalThumb /></VerticalTrack>
        <Svg viewBox="0 0 12 6" $w={12} $h={6} $fill="#505050"><path d="M0 0h12L6 6z" /></Svg>
      </VerticalBar>
      <HorizontalBar>
        <HorizontalThumb />
        <Svg viewBox="0 0 6 12" $w={6} $h={12} $fill="#505050"><path d="M0 0l6 6-6 6z" /></Svg>
      </HorizontalBar>
      <Corner />
      <PageBox>
        <label htmlFor="page-number">Page</label>
        <PageInput id="page-number" defaultValue="1" />
        <span>/ 1</span>
      </PageBox>
    </ViewerArea>
  );
}

function Taskbar() {
  return (
    <Tasks>
      <TaskGroup>
        {SYSTEM_TASKS.map((task) => (
          <TaskButton key={task.label} aria-label={task.label}>{task.icon}</TaskButton>
        ))}
      </TaskGroup>
      <TaskGroup>
        {APP_TASKS.map((task) => (
          <TaskButton key={task.label} aria-label={task.label} $wide $state={task.state}>
            {task.icon}
          </TaskButton>
        ))}
      </TaskGroup>
      <Tray>
        {TRAY.map((item) => (
          <TrayButton key={item.label} aria-label={item.label}>{item.icon}</TrayButton>
        ))}
        <Clock>
          <span>11:53 AM</span>
          <span>11/22/2020</span>
        </Clock>
      </Tray>
    </Tasks>
  );
}

function App() {
  return (
    <>
      <GlobalStyle />
      <Screen>
        <BrowserTabs />
        <AddressBar />
        <KamiHeader />
        <Workspace>
          <Toolbar />
          <Viewer />
        </Workspace>
        <Taskbar />
      </Screen>
    </>
  );
}

export default App;
